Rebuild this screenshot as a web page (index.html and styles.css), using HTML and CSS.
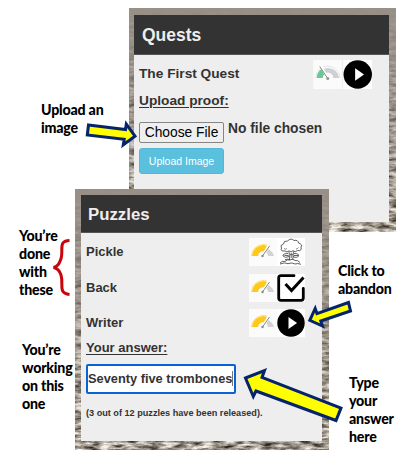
FILE: index.html
```html
<!DOCTYPE html>
<html lang="en">
<head>
<meta charset="utf-8">
<title>Quests and Puzzles</title>
<link rel="stylesheet" href="styles.css">
</head>
<body>
<svg class="defs" width="0" height="0">
  <defs>
    <filter id="wood" x="0" y="0" width="100%" height="100%" color-interpolation-filters="sRGB">
      <feTurbulence type="fractalNoise" baseFrequency="0.08 0.28" numOctaves="4" seed="8"/>
      <feColorMatrix values="1.6 0 0 0 -.17  1.6 0 0 0 -.2  1.6 0 0 0 -.245  0 0 0 0 1"/>
    </filter>
    <linearGradient id="fade" x1="0" y1="0" x2="0" y2="1">
      <stop offset="0" stop-color="#989087"/>
      <stop offset=".2" stop-color="#989087" stop-opacity=".8"/>
      <stop offset=".75" stop-color="#989087" stop-opacity=".3"/>
      <stop offset="1" stop-color="#989087" stop-opacity=".1"/>
    </linearGradient>
    <symbol id="gauge" viewBox="0 0 28 28">
      <rect width="28" height="28" fill="#fbfbfb"/>
      <path d="M3 18a11.400 11.400 0 0 1 22 0h-6a5 5 0 0 0-10 0z" fill="#d2d3d5"/>
      <path d="M3 18A11.400 11.400 0 0 1 18 7.700l-2.800 5.800A5 5 0 0 0 9 18z" fill="#ffc91c"/>
      <path d="M2.500 18A12 12 0 0 1 18 7" fill="none" stroke="#ffe07c"/>
      <path d="M20 7.500l-6.500 10.500" stroke="#fff" stroke-width="2.600"/>
      <path d="M20.500 8l-7 10" stroke="#85878a"/>
      <circle cx="13.500" cy="18" r="1.200" fill="#85878a"/>
    </symbol>
    <symbol id="gauge-low" viewBox="0 0 29 29">
      <rect width="29" height="29" fill="#fbfbfb"/>
      <path d="M3 18a11.600 11.600 0 0 1 23 0h-6a5.500 5.500 0 0 0-11 0z" fill="#cfd0d2"/>
      <path d="M3.500 18A12 12 0 0 1 8 9l3.500 5Q9 16 9.500 18z" fill="#65ca94"/>
      <path d="M2.500 18a12 12 0 0 1 24 0" fill="none" stroke="#e5e6e7"/>
      <path d="M8 6.500l6.500 12" stroke="#fff" stroke-width="2.500"/>
      <path d="M6.500 6.500l8 12" stroke="#858789"/>
      <circle cx="14.500" cy="18.500" r="1.500" fill="#939597"/>
    </symbol>
    <symbol id="play" viewBox="0 0 30 30">
      <rect width="30" height="30" fill="#fff"/>
      <circle cx="15" cy="15" r="14.700"/>
      <path d="M12.300 8.500v13l9.200-6.500z" fill="#fff"/>
    </symbol>
    <symbol id="check" viewBox="0 0 28 28">
      <rect width="28" height="28" fill="#fff"/>
      <path d="M17 1.700H4Q1.700 1.700 1.700 4v20q0 2.300 2.300 2.300h20q2.300 0 2.300-2.300V14.500" fill="none" stroke="#000" stroke-width="2.800" stroke-linecap="round"/>
      <path d="M8.500 10l6 6.500L26.500 3.500" fill="none" stroke="#000" stroke-width="3"/>
    </symbol>
    <symbol id="cloud" viewBox="0 0 28 28">
      <rect width="28" height="28" fill="#fff"/>
      <g fill="none" stroke="#3b3b3b" stroke-width=".8">
        <path d="M8 13Q3 13.500 4.500 10Q2.500 7 6.500 6Q6.500 2.500 10.500 3Q14-.5 17 2.500Q21 1.500 21.500 5Q26 6.500 24 9Q25 13.500 20.500 12.500Q18 15 16 12.700Q14 15 12 12.800Q10 15 8 13z"/>
        <path d="M7 10.500q1.500 1.500 3 0M19 11q1.500 0 2.500-1.500" stroke-width=".6"/>
        <path d="M12 13.500l.7 8.500M16.500 13.500l-.7 8.500M14.200 15v5"/>
        <path d="M11 15.500Q5.500 15.500 6 18Q8 20.500 12 18.500M17 15.500Q22.500 15.500 21.500 18Q20 20.500 16 18.500M7.500 17.500h4M17 17.500h4M13 17q1.500-1.500 3 0"/>
        <path d="M3 25q2-2.500 5-1.500 2-2.500 5-1.500 2.500-2 5 .5 3-.5 5 2M3 26q5-2 8-.3 4-1.700 7 .3 3-1 6 .3M8 21.700q3-1 5 0"/>
      </g>
    </symbol>
  </defs>
</svg>

<main class="canvas">
  <section class="window quests">
    <svg class="texture" width="267" height="224"><rect width="267" height="224" filter="url(#wood)"/><rect width="267" height="224" fill="url(#fade)"/></svg>
    <div class="panel">
      <h2 class="title">Quests</h2>
      <div class="body">
        <div class="row">
          <span>The First Quest</span>
          <span class="icons"><svg><use href="#gauge-low"/></svg><svg><use href="#play"/></svg></span>
        </div>
        <div class="label">Upload proof:</div>
        <div class="file"><button class="choose">Choose File</button><span>No file chosen</span></div>
        <button class="upload">Upload Image</button>
      </div>
    </div>
  </section>

  <section class="window puzzles">
    <svg class="texture" width="254" height="261"><rect width="254" height="261" filter="url(#wood)"/><rect width="254" height="261" fill="url(#fade)"/></svg>
    <div class="panel">
      <h2 class="title">Puzzles</h2>
      <div class="body">
        <div class="row"><span>Pickle</span><span class="icons"><svg><use href="#gauge"/></svg><svg><use href="#cloud"/></svg></span></div>
        <div class="row"><span>Back</span><span class="icons"><svg><use href="#gauge"/></svg><svg><use href="#check"/></svg></span></div>
        <div class="row"><span>Writer</span><span class="icons"><svg><use href="#gauge"/></svg><svg><use href="#play"/></svg></span></div>
        <div class="label">Your answer:</div>
        <div class="answer"><span>Seventy five trombones</span><i class="caret"></i></div>
        <p class="note">(3 out of 12 puzzles have been released).</p>
      </div>
    </div>
  </section>

  <p class="callout c-upload">Upload an<br>image</p>
  <p class="callout c-done">You’re<br>done<br>with<br>these</p>
  <p class="callout c-working">You’re<br>working<br>on this<br>one</p>
  <p class="callout c-abandon">Click to<br>abandon</p>
  <p class="callout c-type">Type<br>your<br>answer<br>here</p>

  <svg class="marks" width="406" height="450" viewBox="0 0 406 450">
    <g fill="#ff0" stroke="#06246b" stroke-width="3">
      <path d="M88.500 125L125.500 129.500L126.300 124.200L135 136.200L123.300 144.800L124.200 139.300L87.300 135z"/>
      <path d="M348.500 302.500L317 313.700L315.200 308.500L309.800 320.300L322.500 326L320.800 321L350.500 311z"/>
      <path d="M245.500 378L264.500 370.500L262 377.500L341 408L336 420.500L256 391L253.300 396.500z"/>
    </g>
    <path d="M69.500 240.500C57 241 64.500 251 60.500 260Q58.500 266.500 53.500 267.500Q59 268.500 61 275C64 285 57.500 293 69.500 294.500" fill="none" stroke="#c9050c" stroke-width="3"/>
  </svg>
</main>
</body>
</html>
```

FILE: styles.css
```css
* { box-sizing: border-box; }
body { margin: 0; background: #fff; font-family: "Liberation Sans", Arial, sans-serif; font-weight: bold; color: #333; }
.defs { position: absolute; }
.canvas { position: relative; width: 406px; height: 450px; overflow: hidden; }
.window { position: absolute; }
.texture { position: absolute; left: 0; top: 0; }
.panel { position: relative; height: 100%; background: #eee; }
.title { margin: 0; background: #333; color: #eee; border-bottom: 1px solid #555; }
.body, .row, .file, .icons, .answer { display: flex; }
.body { flex-direction: column; align-items: flex-start; }
.row { width: 100%; justify-content: space-between; }
button { font-family: inherit; font-weight: normal; padding: 0; }
.label { text-decoration: underline; text-underline-offset: 2px; text-decoration-thickness: 1px; white-space: nowrap; }

.quests { left: 129px; top: 8px; width: 267px; height: 224px; padding: 7px 7px 10px 5px; }
.quests .title { height: 40px; padding-left: 8px; font-size: 17.500px; line-height: 41px; }
.quests .body { padding: 5px 17px 0 5px; font-size: 13.700px; }
.quests .row { height: 29px; line-height: 27px; }
.quests .icons svg { width: 29.500px; height: 29px; }
.quests .label { margin-top: 4px; line-height: 16px; }
.file { margin-top: 13px; gap: 4px; font-size: 13.800px; line-height: 13px; white-space: nowrap; }
.choose { width: 85px; height: 21px; background: #efefef; border: 1px solid #858585; border-radius: 2px; font-size: 13.800px; line-height: 18px; color: #000; }
.upload { width: 85px; height: 26px; margin-top: 5px; background: #5bc0de; border: 1px solid #51b8d7; border-radius: 3px; font-size: 10.500px; color: #fff; }

.puzzles { left: 75px; top: 189px; width: 254px; height: 261px; padding: 6px 7px 9px 6px; }
.puzzles .title { height: 38px; padding-left: 7px; font-size: 16.800px; line-height: 40px; }
.puzzles .body { padding: 5px 17px 0 5px; font-size: 13px; }
.puzzles .row { height: 28px; margin-bottom: 7.500px; line-height: 27px; }
.puzzles .icons svg { width: 28px; height: 28px; }
.puzzles .label { margin-top: -5px; line-height: 16px; }
.answer { width: 150px; height: 30px; margin-top: 8px; align-items: center; background: #fff; border: 2px solid #0b62d6; border-radius: 2px; white-space: nowrap; font-size: 12.800px; }
.caret { width: 1px; height: 15px; background: #777; }
.note { margin: 13px 0 0; font-size: 9.150px; line-height: 12px; white-space: nowrap; }

.callout { position: absolute; margin: 0; color: #000; font: 900 14.200px/18px Lato, "Open Sans", sans-serif; white-space: nowrap; letter-spacing: -.2px; }
.c-upload { left: 41px; top: 101px; }
.c-done { left: 19px; top: 227px; }
.c-working { left: 22px; top: 341px; }
.c-abandon { left: 338px; top: 262px; }
.c-type { left: 349px; top: 374px; }
.marks { position: absolute; left: 0; top: 0; }
```
